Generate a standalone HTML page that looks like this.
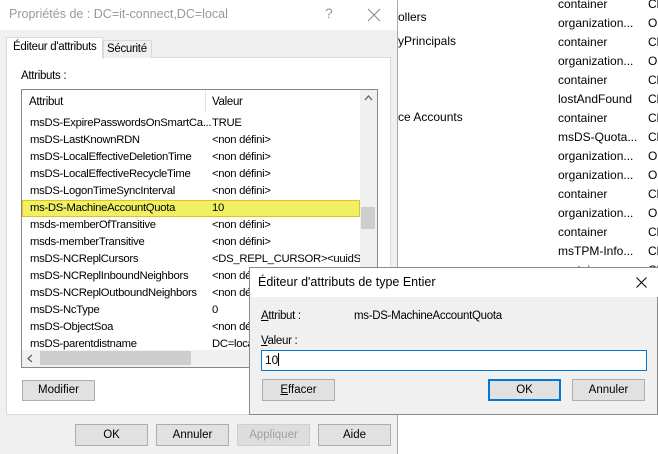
<!DOCTYPE html>
<html><head><meta charset="utf-8"><style>
*{margin:0;padding:0;box-sizing:border-box}
body{width:658px;height:454px;background:#fff;position:relative;overflow:hidden;font-family:"Liberation Sans",sans-serif;font-size:11px;color:#000}
.a{position:absolute;white-space:nowrap}
.btn{position:absolute;background:#e1e1e1;border:1px solid #adadad;text-align:center;line-height:19px;font-size:11.5px}
.r{position:absolute;left:22px;width:338px;height:17px;line-height:17px;font-size:11.3px;letter-spacing:-0.3px;white-space:nowrap;overflow:hidden}
.r span{position:absolute;left:190px}
.r b{font-weight:normal;position:absolute;left:8px}
.bg{position:absolute;left:558px;font-size:12px;line-height:19px}
.bg2{position:absolute;left:648px;font-size:12px;line-height:19px}
</style></head><body>
<div class="a" style="left:398px;top:10px;font-size:12px">ollers</div>
<div class="a" style="left:398px;top:34px;font-size:12px">yPrincipals</div>
<div class="a" style="left:398px;top:110px;font-size:12px">ce Accounts</div>
<div class="bg" style="top:-5px">container<br>organization...<br>container<br>organization...<br>container<br>lostAndFound<br>container<br>msDS-Quota...<br>organization...<br>organization...<br>container<br>organization...<br>container<br>msTPM-Info...<br>container</div>
<div class="bg2" style="top:-5px">Cl<br>O<br>Cl<br>O<br>Cl<br>Cl<br>Cl<br>Cl<br>O<br>O<br>Cl<br>O<br>Cl<br>Cl<br>Cl</div>

<div class="a" style="left:0;top:0;width:398px;height:454px;background:#f0f0f0;border-right:1px solid #aaa"></div>
<div class="a" style="left:0;top:0;width:397px;height:30px;background:#fff"></div>
<div class="a" style="left:9px;top:7px;font-size:12.5px;color:#999">Propriétés de : DC=it-connect,DC=local</div>
<div class="a" style="left:325px;top:5px;font-size:14px;color:#999">?</div>
<svg class="a" style="left:367px;top:8px" width="14" height="14"><path d="M1 1L13 13M13 1L1 13" stroke="#888" stroke-width="1"/></svg>
<div class="a" style="left:6px;top:57px;width:385px;height:358px;background:#fff;border:1px solid #d9d9d9"></div>
<div class="a" style="left:6px;top:37px;width:97px;height:22px;background:#fff;border:1px solid #d9d9d9;border-bottom:none"></div>
<div class="a" style="left:13px;top:41px;font-size:11.5px;letter-spacing:-0.3px">Éditeur d'attributs</div>
<div class="a" style="left:103px;top:40px;width:49px;height:18px;background:#f0f0f0;border:1px solid #d9d9d9;border-bottom:none"></div>
<div class="a" style="left:107px;top:43px;font-size:11.5px;letter-spacing:-0.3px">Sécurité</div>
<div class="a" style="left:21px;top:70px;font-size:11.5px;letter-spacing:-0.3px">Attributs :</div>
<div class="a" style="left:21px;top:89px;width:357px;height:279px;background:#fff;border:1px solid #828790"></div>
<div class="a" style="left:29px;top:96px;font-size:11.5px;letter-spacing:-0.3px">Attribut</div>
<div class="a" style="left:205px;top:90px;width:1px;height:22px;background:#e5e5e5"></div>
<div class="a" style="left:212px;top:96px;font-size:11.5px;letter-spacing:-0.3px">Valeur</div>
<div class="a" style="left:360px;top:90px;width:17px;height:277px;background:#f0f0f0"></div>
<div class="a" style="left:361px;top:207px;width:14px;height:22px;background:#cdcdcd"></div>
<svg class="a" style="left:364px;top:95px" width="9" height="6"><path d="M1 5L4.5 1L8 5" stroke="#606060" fill="none" stroke-width="1.3"/></svg>
<div class="a" style="left:22px;top:350px;width:338px;height:17px;background:#f0f0f0"></div>
<div class="a" style="left:40px;top:351px;width:151px;height:14px;background:#cdcdcd"></div>
<svg class="a" style="left:27px;top:354px" width="6" height="9"><path d="M5 1L1 4.5L5 8" stroke="#606060" fill="none" stroke-width="1.3"/></svg>

<div class="r" style="top:115px"><b>msDS-ExpirePasswordsOnSmartCa...</b><span>TRUE</span></div>
<div class="r" style="top:132px"><b>msDS-LastKnownRDN</b><span>&lt;non défini&gt;</span></div>
<div class="r" style="top:149px"><b>msDS-LocalEffectiveDeletionTime</b><span>&lt;non défini&gt;</span></div>
<div class="r" style="top:166px"><b>msDS-LocalEffectiveRecycleTime</b><span>&lt;non défini&gt;</span></div>
<div class="r" style="top:183px"><b>msDS-LogonTimeSyncInterval</b><span>&lt;non défini&gt;</span></div>
<div class="r" style="top:200px;background:#f0f063;border:1px solid #e6c020;line-height:15px"><b style="left:7px">ms-DS-MachineAccountQuota</b><span style="left:189px">10</span></div>
<div class="r" style="top:217px"><b>msds-memberOfTransitive</b><span>&lt;non défini&gt;</span></div>
<div class="r" style="top:234px"><b>msds-memberTransitive</b><span>&lt;non défini&gt;</span></div>
<div class="r" style="top:251px"><b>msDS-NCReplCursors</b><span>&lt;DS_REPL_CURSOR&gt;&lt;uuidS</span></div>
<div class="r" style="top:268px"><b>msDS-NCReplInboundNeighbors</b><span>&lt;non défini&gt;</span></div>
<div class="r" style="top:285px"><b>msDS-NCReplOutboundNeighbors</b><span>&lt;non défini&gt;</span></div>
<div class="r" style="top:302px"><b>msDS-NcType</b><span>0</span></div>
<div class="r" style="top:319px"><b>msDS-ObjectSoa</b><span>&lt;non défini&gt;</span></div>
<div class="r" style="top:336px;height:14px"><b>msDS-parentdistname</b><span>DC=local</span></div>

<div class="btn" style="left:22px;top:380px;width:73px;height:21px">Modifier</div>
<div class="btn" style="left:75px;top:424px;width:73px;height:22px;line-height:20px">OK</div>
<div class="btn" style="left:156px;top:424px;width:73px;height:22px;line-height:20px">Annuler</div>
<div class="btn" style="left:237px;top:424px;width:73px;height:22px;line-height:20px;color:#a0a0a0;border-color:#cfcfcf;background:#ddd">Appliquer</div>
<div class="btn" style="left:318px;top:424px;width:73px;height:22px;line-height:20px">Aide</div>

<div class="a" style="left:249px;top:267px;width:409px;height:148px;background:#f0f0f0;border:1px solid #888"></div>
<div class="a" style="left:250px;top:268px;width:408px;height:29px;background:#fff"></div>
<div class="a" style="left:258px;top:275px;font-size:12.5px">Éditeur d'attributs de type Entier</div>
<svg class="a" style="left:636px;top:277px" width="11" height="11"><path d="M0.5 0.5L10.5 10.5M10.5 0.5L0.5 10.5" stroke="#000" stroke-width="1"/></svg>
<div class="a" style="left:261px;top:310px;font-size:11.5px;letter-spacing:-0.3px"><u>A</u>ttribut :</div>
<div class="a" style="left:354px;top:310px;font-size:11.5px;letter-spacing:-0.3px">ms-DS-MachineAccountQuota</div>
<div class="a" style="left:261px;top:335px;font-size:11.5px;letter-spacing:-0.3px"><u>V</u>aleur :</div>
<div class="a" style="left:261px;top:350px;width:386px;height:21px;background:#fff;border:1px solid #0078d7"></div>
<div class="a" style="left:265px;top:353px;font-size:12px">10<span style="display:inline-block;width:1px;height:13px;background:#000;vertical-align:-2px"></span></div>
<div class="btn" style="left:262px;top:379px;width:73px;height:22px;line-height:20px"><u>E</u>ffacer</div>
<div class="btn" style="left:488px;top:379px;width:73px;height:22px;line-height:18px;border:2px solid #0078d7">OK</div>
<div class="btn" style="left:572px;top:379px;width:73px;height:22px;line-height:20px">Annuler</div>
</body></html>
